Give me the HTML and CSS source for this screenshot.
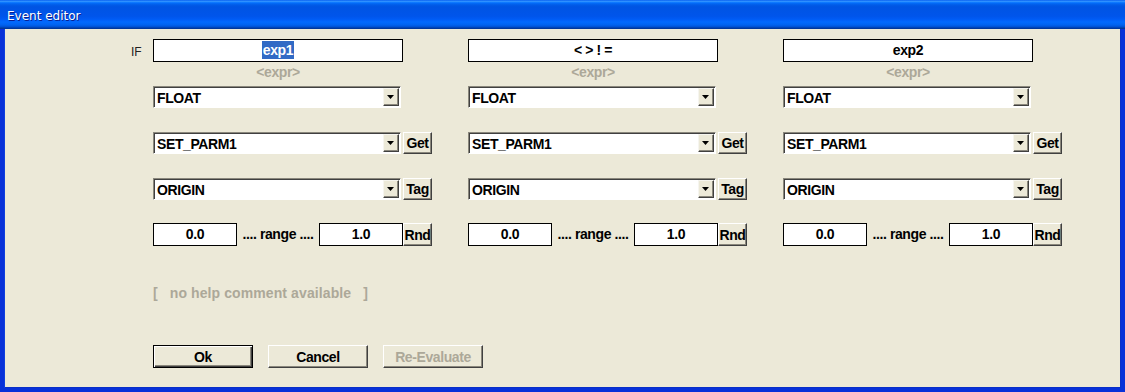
FILE: index.html
```html
<!DOCTYPE html>
<html>
<head>
<meta charset="utf-8">
<link rel="stylesheet" href="styles.css">
</head>
<body>
<div class="window">
  <div class="titlebar"><span class="title">Event editor</span></div>
  <div class="frame">
    <div class="grid">
      <div class="if-col"><span class="if">IF</span></div>

      <div class="col">
        <div class="exp"><span class="sel">exp1</span></div>
        <div class="hint">&lt;expr&gt;</div>
        <div class="row first">
          <div class="combo"><span class="val">FLOAT</span><span class="drop"><svg width="7" height="4" viewBox="0 0 7 4"><polygon points="0,0 7,0 3.5,4" fill="#000"/></svg></span></div>
        </div>
        <div class="row">
          <div class="combo"><span class="val">SET_PARM1</span><span class="drop"><svg width="7" height="4" viewBox="0 0 7 4"><polygon points="0,0 7,0 3.5,4" fill="#000"/></svg></span></div>
          <div class="btn side">Get</div>
        </div>
        <div class="row">
          <div class="combo"><span class="val">ORIGIN</span><span class="drop"><svg width="7" height="4" viewBox="0 0 7 4"><polygon points="0,0 7,0 3.5,4" fill="#000"/></svg></span></div>
          <div class="btn side">Tag</div>
        </div>
        <div class="row range">
          <div class="num">0.0</div>
          <div class="range-text">.... range ....</div>
          <div class="num">1.0</div>
          <div class="btn side tall">Rnd</div>
        </div>
      </div>

      <div class="col">
        <div class="exp">&lt; &gt; ! =</div>
        <div class="hint">&lt;expr&gt;</div>
        <div class="row first">
          <div class="combo"><span class="val">FLOAT</span><span class="drop"><svg width="7" height="4" viewBox="0 0 7 4"><polygon points="0,0 7,0 3.5,4" fill="#000"/></svg></span></div>
        </div>
        <div class="row">
          <div class="combo"><span class="val">SET_PARM1</span><span class="drop"><svg width="7" height="4" viewBox="0 0 7 4"><polygon points="0,0 7,0 3.5,4" fill="#000"/></svg></span></div>
          <div class="btn side">Get</div>
        </div>
        <div class="row">
          <div class="combo"><span class="val">ORIGIN</span><span class="drop"><svg width="7" height="4" viewBox="0 0 7 4"><polygon points="0,0 7,0 3.5,4" fill="#000"/></svg></span></div>
          <div class="btn side">Tag</div>
        </div>
        <div class="row range">
          <div class="num">0.0</div>
          <div class="range-text">.... range ....</div>
          <div class="num">1.0</div>
          <div class="btn side tall">Rnd</div>
        </div>
      </div>

      <div class="col">
        <div class="exp">exp2</div>
        <div class="hint">&lt;expr&gt;</div>
        <div class="row first">
          <div class="combo"><span class="val">FLOAT</span><span class="drop"><svg width="7" height="4" viewBox="0 0 7 4"><polygon points="0,0 7,0 3.5,4" fill="#000"/></svg></span></div>
        </div>
        <div class="row">
          <div class="combo"><span class="val">SET_PARM1</span><span class="drop"><svg width="7" height="4" viewBox="0 0 7 4"><polygon points="0,0 7,0 3.5,4" fill="#000"/></svg></span></div>
          <div class="btn side">Get</div>
        </div>
        <div class="row">
          <div class="combo"><span class="val">ORIGIN</span><span class="drop"><svg width="7" height="4" viewBox="0 0 7 4"><polygon points="0,0 7,0 3.5,4" fill="#000"/></svg></span></div>
          <div class="btn side">Tag</div>
        </div>
        <div class="row range">
          <div class="num">0.0</div>
          <div class="range-text">.... range ....</div>
          <div class="num">1.0</div>
          <div class="btn side tall">Rnd</div>
        </div>
      </div>
    </div>

    <div class="help">[&nbsp;&nbsp;&nbsp;no help comment available&nbsp;&nbsp;&nbsp;]</div>

    <div class="actions">
      <div class="btn action default">Ok</div>
      <div class="btn action">Cancel</div>
      <div class="btn action disabled">Re-Evaluate</div>
    </div>
  </div>
</div>
</body>
</html>
```

FILE: styles.css
```css
html, body {
  margin: 0;
  padding: 0;
  width: 1125px;
  height: 392px;
  overflow: hidden;
  background: #ECE9D8;
}

.window {
  width: 1125px;
  height: 392px;
  display: flex;
  flex-direction: column;
  font-family: "Liberation Sans", Arial, sans-serif;
  font-size: 14px;
  letter-spacing: -0.4px;
  font-weight: bold;
  color: #000;
}

.titlebar {
  height: 29px;
  flex: none;
  box-sizing: border-box;
  padding: 2px 0 0 7px;
  display: flex;
  align-items: center;
  background: linear-gradient(to bottom,
    #0058EE 0%, #3593FF 4%, #288EFF 6%, #127DFF 8%, #036FFC 10%,
    #0262EE 14%, #0057E5 20%, #0054E3 24%, #0055EB 56%, #005BF5 66%,
    #026AFE 76%, #0062EF 86%, #0052D6 92%, #0040AB 96%, #003092 100%);
}

.title {
  font-family: "DejaVu Sans", Tahoma, sans-serif;
  font-size: 12px;
  font-weight: normal;
  letter-spacing: 0;
  color: #fff;
  text-shadow: 1px 1px 0 #0a1f8f;
}

.frame {
  flex: 1;
  box-sizing: border-box;
  background: #ECE9D8;
  border-style: solid;
  border-width: 0 4px 4px 4px;
  border-color: #0831D9;
  box-shadow: inset 1px 0 0 #0f3fe0, inset -1px -1px 0 #0a2fc8;
  padding: 10px 0 0 127px;
  display: flex;
  flex-direction: column;
}

.grid {
  display: grid;
  grid-template-columns: 22px 315px 315px 315px;
}

.if-col {
  height: 23px;
  display: flex;
  align-items: center;
}

.if {
  font-family: "Liberation Sans", Arial, sans-serif;
  font-size: 12px;
  font-weight: normal;
  letter-spacing: 0;
  color: #222;
  padding-top: 2px;
}

.col {
  display: flex;
  flex-direction: column;
}

.exp {
  width: 250px;
  height: 23px;
  box-sizing: border-box;
  border: 1px solid #000;
  background: #fff;
  text-align: center;
  line-height: 21px;
}

.sel {
  background: #316AC5;
  color: #fff;
  padding: 1px 1px;
}

.hint {
  width: 250px;
  height: 20px;
  line-height: 20px;
  text-align: center;
  color: #ACA899;
}

.row {
  display: flex;
  align-items: center;
  height: 22px;
  margin-top: 24px;
}

.row.first {
  margin-top: 4px;
}

.row.range {
  margin-top: 23px;
  height: 23px;
}

.combo {
  width: 248px;
  height: 22px;
  box-sizing: border-box;
  border-style: solid;
  border-width: 1px;
  border-color: #8a877c #fff #fff #8a877c;
  box-shadow: inset 1px 1px 0 #404040;
  background: #fff;
  display: flex;
  align-items: center;
  justify-content: space-between;
  padding: 0 1px 0 3px;
}

.val {
  padding-top: 1px;
}

.drop {
  width: 16px;
  height: 18px;
  box-sizing: border-box;
  background: #ECE9D8;
  border-style: solid;
  border-width: 1px;
  border-color: #f6f5ef #404040 #404040 #f6f5ef;
  box-shadow: inset -1px -1px 0 #8a877c;
  display: flex;
  align-items: center;
  justify-content: center;
  padding: 0 1px 1px 0;
}

.drop svg {
  display: block;
}

.btn {
  box-sizing: border-box;
  background: #ECE9D8;
  border-style: solid;
  border-width: 1px;
  border-color: #fff #404040 #404040 #fff;
  box-shadow: inset -1px -1px 0 #8a877c;
  display: flex;
  align-items: center;
  justify-content: center;
  color: #000;
}

.side {
  width: 29px;
  height: 22px;
  margin-left: 2px;
}

.side.tall {
  height: 23px;
  margin-left: 0;
}

.num {
  width: 84px;
  height: 23px;
  box-sizing: border-box;
  border: 1px solid #000;
  background: #fff;
  text-align: center;
  line-height: 21px;
}

.range-text {
  width: 82px;
  text-align: center;
  padding-bottom: 2px;
}

.help {
  margin: 38px 0 0 22px;
  height: 18px;
  line-height: 18px;
  letter-spacing: 0.1px;
  color: #ACA899;
}

.actions {
  margin: 43px 0 0 22px;
  display: flex;
  gap: 15px;
}

.action {
  width: 100px;
  height: 23px;
}

.action.default {
  border-color: #000;
  box-shadow: inset 1px 1px 0 #fff, inset -1px -1px 0 #404040, inset -2px -2px 0 #8a877c;
}

.action.disabled {
  color: #ACA899;
}
```
